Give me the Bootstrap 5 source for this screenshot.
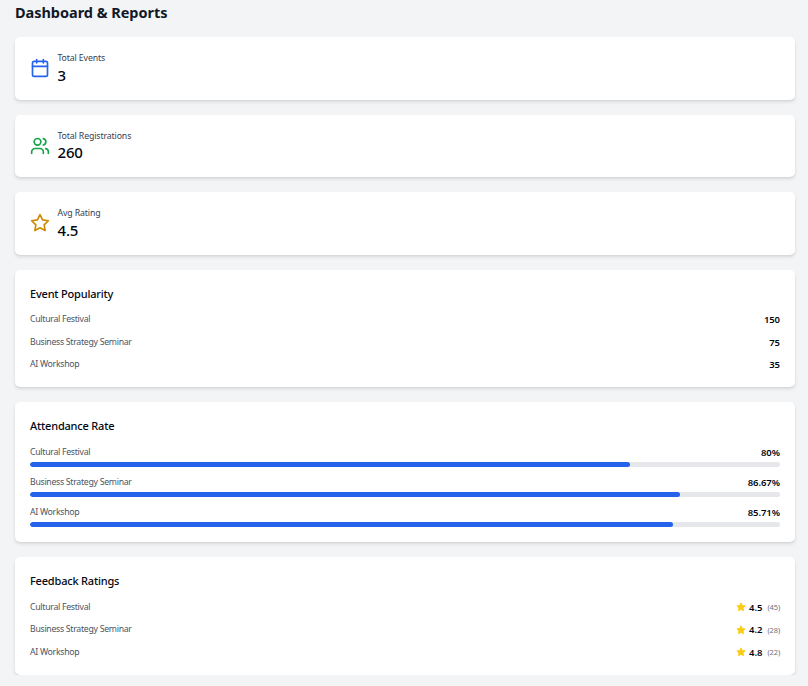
<!DOCTYPE html>
<html lang="en">
<head>
<meta charset="utf-8">
<meta name="viewport" content="width=device-width, initial-scale=1">
<title>Dashboard &amp; Reports</title>
<link href="https://cdn.jsdelivr.net/npm/bootstrap@5.3.0/dist/css/bootstrap.min.css" rel="stylesheet">
<style>
  html { font-size: 10px; }
  body { font-family: "Segoe UI", "Noto Sans", "Open Sans", sans-serif; font-size: 10px; line-height: 15px; color: #030712; background: #f3f4f6; overflow: hidden; }
  .page { padding: 2.3px 13px 0 15px; }
  .stack { gap: 15px; }
  .page-title { font-size: 14.5px; line-height: 20px; font-weight: 700; color: #111827; letter-spacing: -.04px; }
  .panel { border: 0; border-radius: 5px; padding: 15px; color: inherit; box-shadow: 0 2.5px 3.75px -.6px rgba(0,0,0,.1), 0 1.25px 2.5px -1.25px rgba(0,0,0,.1); }
  .stat { gap: 7.5px; }
  .stat svg { width: 20px; height: 20px; margin-bottom: 1px; }
  .line-icon { fill: none; stroke: currentColor; stroke-width: 2; stroke-linecap: round; stroke-linejoin: round; }
  .tone-blue { color: #2563eb; }
  .tone-green { color: #16a34a; }
  .tone-amber { color: #ca8a04; }
  .label { font-size: 8.75px; line-height: 12.5px; color: #4b5563; letter-spacing: -.2px; }
  .stat .label { color: #374151; letter-spacing: -.13px; }
  .rows .label { padding-top: .8px; letter-spacing: -.3px; }
  .figure-value { font-size: 15px; line-height: 20px; font-weight: 500; letter-spacing: -.2px; }
  .panel-title { font-size: 11px; line-height: 17.5px; font-weight: 500; margin-bottom: 10px; letter-spacing: -.19px; }
  .rows { gap: 7.5px; }
  .value { font-weight: 600; font-size: 9.5px; line-height: 15px; letter-spacing: -.06px; }
  .meter { height: 5px; margin-top: 2.5px; border-radius: 5px; background: #e5e7eb; }
  .meter .progress-bar { background: #2563eb; border-radius: 5px; }
  .star { width: 10px; height: 10px; fill: #facc15; stroke: #facc15; stroke-width: 2; stroke-linejoin: round; margin-right: 2.8px; }
  .reviews { font-size: 7.5px; line-height: 10px; color: #6b7280; margin-left: 5.2px; letter-spacing: -.15px; }
</style>
<script src="https://cdn.jsdelivr.net/npm/bootstrap@5.3.0/dist/js/bootstrap.bundle.min.js"></script>
</head>
<body>
<main class="page d-flex flex-column stack">
  <h1 class="page-title mb-0">Dashboard &amp; Reports</h1>

  <section class="card panel">
    <div class="stat d-flex align-items-center">
      <svg class="line-icon tone-blue" viewBox="0 0 24 24"><path d="M8 2v4M16 2v4"/><rect x="3" y="4" width="18" height="18" rx="2"/><path d="M3 10h18"/></svg>
      <div><div class="label">Total Events</div><div class="figure-value">3</div></div>
    </div>
  </section>
  <section class="card panel">
    <div class="stat d-flex align-items-center">
      <svg class="line-icon tone-green" viewBox="0 0 24 24"><path d="M16 21v-2a4 4 0 0 0-4-4H6a4 4 0 0 0-4 4v2"/><circle cx="9" cy="7" r="4"/><path d="M22 21v-2a4 4 0 0 0-3-3.87M16 3.13a4 4 0 0 1 0 7.75"/></svg>
      <div><div class="label">Total Registrations</div><div class="figure-value">260</div></div>
    </div>
  </section>
  <section class="card panel">
    <div class="stat d-flex align-items-center">
      <svg class="line-icon tone-amber" viewBox="0 0 24 24"><path d="M12 2l3.09 6.26L22 9.27l-5 4.87 1.18 6.88L12 17.77l-6.18 3.25L7 14.14 2 9.27l6.91-1.01z"/></svg>
      <div><div class="label">Avg Rating</div><div class="figure-value">4.5</div></div>
    </div>
  </section>

  <section class="card panel">
    <h2 class="panel-title">Event Popularity</h2>
    <div class="rows d-flex flex-column">
      <div class="d-flex justify-content-between align-items-start"><span class="label">Cultural Festival</span><span class="value">150</span></div>
      <div class="d-flex justify-content-between align-items-start"><span class="label">Business Strategy Seminar</span><span class="value">75</span></div>
      <div class="d-flex justify-content-between align-items-start"><span class="label">AI Workshop</span><span class="value">35</span></div>
    </div>
  </section>

  <section class="card panel">
    <h2 class="panel-title">Attendance Rate</h2>
    <div class="rows d-flex flex-column">
      <div>
        <div class="d-flex justify-content-between align-items-start"><span class="label">Cultural Festival</span><span class="value">80%</span></div>
        <div class="progress meter"><div class="progress-bar" style="width: 80%"></div></div>
      </div>
      <div>
        <div class="d-flex justify-content-between align-items-start"><span class="label">Business Strategy Seminar</span><span class="value">86.67%</span></div>
        <div class="progress meter"><div class="progress-bar" style="width: 86.67%"></div></div>
      </div>
      <div>
        <div class="d-flex justify-content-between align-items-start"><span class="label">AI Workshop</span><span class="value">85.71%</span></div>
        <div class="progress meter"><div class="progress-bar" style="width: 85.71%"></div></div>
      </div>
    </div>
  </section>

  <section class="card panel">
    <h2 class="panel-title">Feedback Ratings</h2>
    <div class="rows d-flex flex-column">
      <div class="d-flex justify-content-between align-items-start"><span class="label">Cultural Festival</span>
        <div class="d-flex align-items-center"><svg class="star" viewBox="0 0 24 24"><path d="M12 2l3.09 6.26L22 9.27l-5 4.87 1.18 6.88L12 17.77l-6.18 3.25L7 14.14 2 9.27l6.91-1.01z"/></svg><span class="value">4.5</span><span class="reviews">(45)</span></div></div>
      <div class="d-flex justify-content-between align-items-start"><span class="label">Business Strategy Seminar</span>
        <div class="d-flex align-items-center"><svg class="star" viewBox="0 0 24 24"><path d="M12 2l3.09 6.26L22 9.27l-5 4.87 1.18 6.88L12 17.77l-6.18 3.25L7 14.14 2 9.27l6.91-1.01z"/></svg><span class="value">4.2</span><span class="reviews">(28)</span></div></div>
      <div class="d-flex justify-content-between align-items-start"><span class="label">AI Workshop</span>
        <div class="d-flex align-items-center"><svg class="star" viewBox="0 0 24 24"><path d="M12 2l3.09 6.26L22 9.27l-5 4.87 1.18 6.88L12 17.77l-6.18 3.25L7 14.14 2 9.27l6.91-1.01z"/></svg><span class="value">4.8</span><span class="reviews">(22)</span></div></div>
    </div>
  </section>
</main>
</body>
</html>
